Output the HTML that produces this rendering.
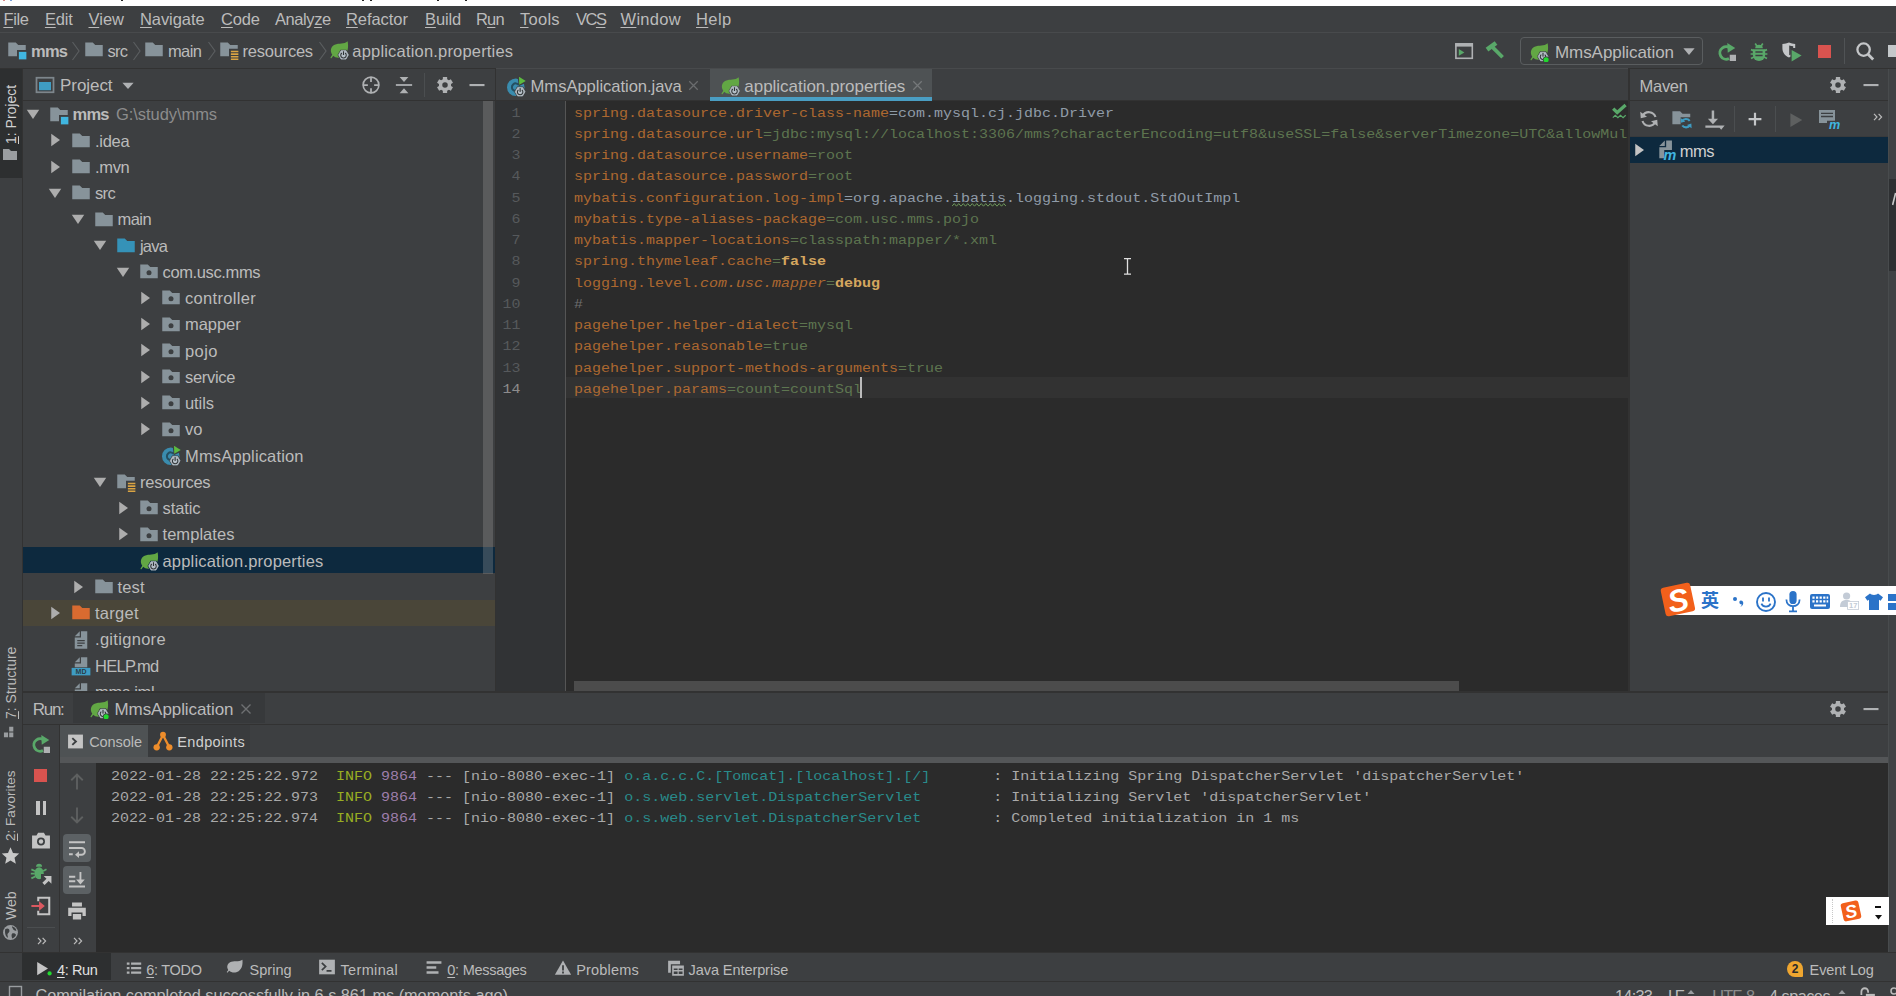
<!DOCTYPE html>
<html lang="en"><head><meta charset="utf-8"><title>mms - application.properties</title><style>
html,body{margin:0;padding:0;background:#3c3f41;}
body{width:1896px;height:996px;position:relative;overflow:hidden;font-family:"Liberation Sans",sans-serif;}
.u{position:absolute;white-space:pre;font-family:"Liberation Sans",sans-serif;}
.m{position:absolute;white-space:pre;font-family:"Liberation Mono",monospace;transform:scaleY(0.83);transform-origin:0 14.5px;opacity:.8;}
.mc{transform:scaleY(0.9);opacity:.88;}
u{text-decoration:underline;text-underline-offset:2px;text-decoration-thickness:1px}
</style></head>
<body>
<div style="position:absolute;left:0px;top:0px;width:1896px;height:6px;background:#ffffff;"></div>
<div style="position:absolute;left:10px;top:0px;width:2px;height:1px;background:#7aa0d8;"></div>
<div style="position:absolute;left:3px;top:0px;width:2px;height:1px;background:#d88a8a;"></div>
<div style="position:absolute;left:121px;top:0px;width:2px;height:1px;background:#222;"></div>
<div style="position:absolute;left:362px;top:0px;width:2px;height:1px;background:#222;"></div>
<div style="position:absolute;left:370px;top:0px;width:2px;height:1px;background:#222;"></div>
<div style="position:absolute;left:437px;top:0px;width:2px;height:1px;background:#222;"></div>
<div style="position:absolute;left:465px;top:0px;width:2px;height:1px;background:#222;"></div>
<div style="position:absolute;left:0px;top:6px;width:1896px;height:990px;background:#3d3f41;"></div>
<div style="position:absolute;left:0px;top:32px;width:1896px;height:1px;background:#484a4c;"></div>
<div class="u" style="left:3.4px;top:7.00px;height:24px;line-height:24px;font-size:16.5px;color:#bbbbbb;;letter-spacing:-0.327px"><u>F</u>ile</div>
<div class="u" style="left:44.9px;top:7.00px;height:24px;line-height:24px;font-size:16.5px;color:#bbbbbb;;letter-spacing:-0.188px"><u>E</u>dit</div>
<div class="u" style="left:88.5px;top:7.00px;height:24px;line-height:24px;font-size:16.5px;color:#bbbbbb;;letter-spacing:0.004px"><u>V</u>iew</div>
<div class="u" style="left:140px;top:7.00px;height:24px;line-height:24px;font-size:16.5px;color:#bbbbbb;;letter-spacing:-0.08px"><u>N</u>avigate</div>
<div class="u" style="left:221px;top:7.00px;height:24px;line-height:24px;font-size:16.5px;color:#bbbbbb;;letter-spacing:-0.138px"><u>C</u>ode</div>
<div class="u" style="left:275px;top:7.00px;height:24px;line-height:24px;font-size:16.5px;color:#bbbbbb;;letter-spacing:-0.431px">Analy<u>z</u>e</div>
<div class="u" style="left:346px;top:7.00px;height:24px;line-height:24px;font-size:16.5px;color:#bbbbbb;;letter-spacing:-0.072px"><u>R</u>efactor</div>
<div class="u" style="left:425px;top:7.00px;height:24px;line-height:24px;font-size:16.5px;color:#bbbbbb;;letter-spacing:-0.121px"><u>B</u>uild</div>
<div class="u" style="left:476px;top:7.00px;height:24px;line-height:24px;font-size:16.5px;color:#bbbbbb;;letter-spacing:-0.866px">R<u>u</u>n</div>
<div class="u" style="left:520px;top:7.00px;height:24px;line-height:24px;font-size:16.5px;color:#bbbbbb;;letter-spacing:0.274px"><u>T</u>ools</div>
<div class="u" style="left:576px;top:7.00px;height:24px;line-height:24px;font-size:16.5px;color:#bbbbbb;;letter-spacing:-1.513px">VC<u>S</u></div>
<div class="u" style="left:620.5px;top:7.00px;height:24px;line-height:24px;font-size:16.5px;color:#bbbbbb;;letter-spacing:0.299px"><u>W</u>indow</div>
<div class="u" style="left:696px;top:7.00px;height:24px;line-height:24px;font-size:16.5px;color:#bbbbbb;;letter-spacing:0.387px"><u>H</u>elp</div>
<div style="position:absolute;left:0px;top:68px;width:1896px;height:1px;background:#323232;"></div>
<svg style="position:absolute;left:7px;top:40px" width="20" height="20" viewBox="0 0 16 16" ><path fill="#87939A" d="M1,13 L8,13 L8,8 L15,8 L15,4 L9,4 L7,2 L1,2 Z"/><rect x="9.5" y="9.5" width="6" height="6" fill="#40B6E0"/></svg>
<div class="u" style="left:31px;top:39.20px;height:24px;line-height:24px;font-size:16.5px;color:#bbbbbb;font-weight:bold;letter-spacing:-0.744px">mms</div>
<svg style="position:absolute;left:71px;top:41px" width="10" height="20" viewBox="0 0 10 20" ><path d="M1.5,1 L8,10 L1.5,19" fill="none" stroke="#5a5d5f" stroke-width="1.2"/></svg>
<svg style="position:absolute;left:84px;top:40px" width="20" height="20" viewBox="0 0 16 16" ><path fill="#87939A" d="M1,13 L15,13 L15,4 L9,4 L7,2 L1,2 Z"/></svg>
<div class="u" style="left:107.4px;top:39.20px;height:24px;line-height:24px;font-size:16.5px;color:#bbbbbb;;letter-spacing:-0.667px">src</div>
<svg style="position:absolute;left:132px;top:41px" width="10" height="20" viewBox="0 0 10 20" ><path d="M1.5,1 L8,10 L1.5,19" fill="none" stroke="#5a5d5f" stroke-width="1.2"/></svg>
<svg style="position:absolute;left:144px;top:40px" width="20" height="20" viewBox="0 0 16 16" ><path fill="#87939A" d="M1,13 L15,13 L15,4 L9,4 L7,2 L1,2 Z"/></svg>
<div class="u" style="left:167.9px;top:39.20px;height:24px;line-height:24px;font-size:16.5px;color:#bbbbbb;;letter-spacing:-0.541px">main</div>
<svg style="position:absolute;left:207px;top:41px" width="10" height="20" viewBox="0 0 10 20" ><path d="M1.5,1 L8,10 L1.5,19" fill="none" stroke="#5a5d5f" stroke-width="1.2"/></svg>
<svg style="position:absolute;left:219px;top:40px" width="20" height="20" viewBox="0 0 16 16" ><path fill="#87939A" d="M1,13 L8,13 L8,7 L15,7 L15,4 L9,4 L7,2 L1,2 Z"/><path fill="#D9A343" d="M9.5,8.5h6v1.3h-6z M9.5,10.6h6v1.3h-6z M9.5,12.7h6v1.3h-6z M9.5,14.8h6v1.2h-6z"/></svg>
<div class="u" style="left:242.5px;top:39.20px;height:24px;line-height:24px;font-size:16.5px;color:#bbbbbb;;letter-spacing:-0.228px">resources</div>
<svg style="position:absolute;left:318px;top:41px" width="10" height="20" viewBox="0 0 10 20" ><path d="M1.5,1 L8,10 L1.5,19" fill="none" stroke="#5a5d5f" stroke-width="1.2"/></svg>
<svg style="position:absolute;left:329px;top:40px" width="20" height="20" viewBox="0 0 16 16" ><path fill="#62A744" d="M14.9,1 C15.7,5.2 15.5,10.4 11.2,13.1 C8,15 4.8,14.1 3.4,12.6 L2.1,14.4 C1.8,14.9 1,14.4 1.3,13.8 L2.6,11.7 C0.6,8.8 1.4,5.3 4.5,3.8 C8,2.2 12,3.7 14.9,1 Z"/><polygon points="16.40,11.90 14.00,16.06 9.20,16.06 6.80,11.90 9.20,7.74 14.00,7.74" fill="#3c3f41"/><polygon points="15.50,11.90 13.55,15.28 9.65,15.28 7.70,11.90 9.65,8.52 13.55,8.52" fill="#B4BEC6" stroke="#B4BEC6" stroke-width="0.6" stroke-linejoin="round"/><path fill="none" stroke="#2f3335" stroke-width="0.85" d="M10.25,10.4 A2.2,2.2 0 1 0 12.95,10.4"/><rect x="11.15" y="9.0" width="0.9" height="3" fill="#2f3335"/></svg>
<div class="u" style="left:352.3px;top:39.20px;height:24px;line-height:24px;font-size:16.5px;color:#bbbbbb;;letter-spacing:0.188px">application.properties</div>
<svg style="position:absolute;left:1454px;top:41px" width="20" height="20" viewBox="0 0 20 20" ><rect x="1.9" y="2.9" width="16.4" height="14.4" fill="none" stroke="#AFB1B3" stroke-width="1.6"/><rect x="1.2" y="2.2" width="17.8" height="3.4" fill="#AFB1B3"/><path fill="#59A869" d="M4.8,8 L10.4,11.4 L4.8,14.8 Z"/></svg>
<svg style="position:absolute;left:1484px;top:40px" width="22" height="22" viewBox="0 0 22 22" ><path stroke="#59A869" stroke-width="4.6" fill="none" d="M3,9.6 L12,3"/><path stroke="#59A869" stroke-width="3.7" fill="none" d="M8,6.6 L18.6,17.2"/></svg>
<div style="position:absolute;left:1520px;top:37px;width:181px;height:26px;border:1px solid #5a5d5f;border-radius:4px;box-sizing:content-box"></div>
<svg style="position:absolute;left:1528.5px;top:41.5px" width="20" height="20" viewBox="0 0 16 16" ><path fill="#62A744" d="M14.9,1 C15.7,5.2 15.5,10.4 11.2,13.1 C8,15 4.8,14.1 3.4,12.6 L2.1,14.4 C1.8,14.9 1,14.4 1.3,13.8 L2.6,11.7 C0.6,8.8 1.4,5.3 4.5,3.8 C8,2.2 12,3.7 14.9,1 Z"/><polygon points="16.00,11.60 13.60,15.76 8.80,15.76 6.40,11.60 8.80,7.44 13.60,7.44" fill="#3c3f41"/><polygon points="15.10,11.60 13.15,14.98 9.25,14.98 7.30,11.60 9.25,8.22 13.15,8.22" fill="#B4BEC6" stroke="#B4BEC6" stroke-width="0.6" stroke-linejoin="round"/><path fill="none" stroke="#2f3335" stroke-width="0.85" d="M9.85,10.1 A2.2,2.2 0 1 0 12.549999999999999,10.1"/><rect x="10.75" y="8.7" width="0.9" height="3" fill="#2f3335"/><circle cx="13.7" cy="14.2" r="2.6" fill="#3c3f41"/><circle cx="13.7" cy="14.2" r="2.05" fill="#21D82E"/></svg>
<div class="u" style="left:1555px;top:41.20px;height:24px;line-height:24px;font-size:17px;color:#bbbbbb;;letter-spacing:-0.071px">MmsApplication</div>
<svg style="position:absolute;left:1680px;top:42px" width="18" height="18" viewBox="0 0 16 16" ><path fill="#AFB1B3" d="M3,5.5 L13,5.5 L8,11.5 Z"/></svg>
<svg style="position:absolute;left:1717px;top:42px" width="20" height="20" viewBox="0 0 16 16" ><path fill="none" stroke="#59A869" stroke-width="2.3" d="M11.2,5.6 A5,5 0 1 0 9.6,13.2"/><path fill="#59A869" d="M8.2,0.8 L14.6,4.8 L8.6,8.6 Z"/><rect x="10.2" y="10.2" width="5" height="5" fill="#AFB1B3"/></svg>
<svg style="position:absolute;left:1749px;top:42px" width="20" height="20" viewBox="0 0 20 20" ><path stroke="#59A869" stroke-width="1.7" fill="none" d="M6.2,1.6 L8,4.2 M13.8,1.6 L12,4.2 M2,7.6 L5,8.8 M1.6,12 L5,12 M2,16.6 L5,15 M18,7.6 L15,8.8 M18.4,12 L15,12 M18,16.6 L15,15"/><path fill="#59A869" d="M6.2,6.2 A3.8,3.4 0 0 1 13.8,6.2 Z"/><path fill="#59A869" d="M3.8,7.2 h12.4 v5.6 a6.2,6.2 0 0 1 -12.4,0 z"/><path stroke="#3c3f41" stroke-width="1.5" d="M6.4,10 H13.6 M6.4,13.6 H13.6"/></svg>
<svg style="position:absolute;left:1781px;top:42px" width="21" height="21" viewBox="0 0 21 21" ><path fill="#C4C6C8" d="M1.4,2 C4,2 6,1.4 8,0.6 C10,1.4 12,2 14.2,2 L14.2,6 L9.4,6 L9.4,14.8 L8,15.6 C3.4,13.4 1.4,10 1.4,6 Z"/><path fill="#3c3f41" d="M8.2,3.4 C9.8,3.9 11,4.1 12.2,4.2 L12.2,7.2 L9.8,7.2 L9.8,12.4 L8.2,13.2 Z"/><path fill="#59A869" d="M10.6,8 L20.6,13.6 L10.6,19.4 Z"/></svg>
<div style="position:absolute;left:1818px;top:45px;width:13px;height:13px;background:#D9534F;"></div>
<div style="position:absolute;left:1844px;top:38px;width:1px;height:26px;background:#505355;"></div>
<svg style="position:absolute;left:1854px;top:41px" width="22" height="22" viewBox="0 0 22 22" ><circle cx="9.6" cy="8.6" r="6.2" fill="none" stroke="#C4C6C8" stroke-width="2.3"/><path stroke="#C4C6C8" stroke-width="2.8" d="M13.8,13 L19.2,18.4"/></svg>
<div style="position:absolute;left:1888px;top:45px;width:8px;height:12px;background:#c4c8ca;"></div>
<div style="position:absolute;left:22px;top:69px;width:1px;height:884px;background:#323232;"></div>
<div style="position:absolute;left:0px;top:69px;width:22px;height:109px;background:#2d2f30;"></div>
<div class="u" style="left:11px;top:144px;height:20px;line-height:20px;margin-left:-10px;font-size:14px;color:#d0d0d0;letter-spacing:0px;transform-origin:0 0;transform:translate(0px,0px) rotate(-90deg);"><u>1</u>: Project</div>
<svg style="position:absolute;left:2px;top:147px" width="16" height="16" viewBox="0 0 16 16" ><path fill="#9a9da0" d="M1,13 L15,13 L15,4 L9,4 L7,2 L1,2 Z"/></svg>
<div class="u" style="left:11px;top:719px;height:20px;line-height:20px;margin-left:-10px;font-size:14px;color:#bbbbbb;letter-spacing:0px;transform-origin:0 0;transform:translate(0px,0px) rotate(-90deg);"><u>7</u>: Structure</div>
<svg style="position:absolute;left:3px;top:724px" width="15" height="15" viewBox="0 0 16 16" ><path fill="#9a9da0" d="M1,9 h4.4 v5 h-4.4z M6.6,9 h4.4 v5 h-4.4z M6.6,3 h4.4 v5 h-4.4z" /></svg>
<div class="u" style="left:11px;top:841px;height:20px;line-height:20px;margin-left:-10px;font-size:13.5px;color:#bbbbbb;letter-spacing:0px;transform-origin:0 0;transform:translate(0px,0px) rotate(-90deg);"><u>2</u>: Favorites</div>
<svg style="position:absolute;left:1px;top:846px" width="19" height="19" viewBox="0 0 16 16" ><path fill="#c8c8c8" d="M8,1 L10.1,5.8 L15.3,6.3 L11.4,9.8 L12.5,14.9 L8,12.2 L3.5,14.9 L4.6,9.8 L0.7,6.3 L5.9,5.8 Z"/></svg>
<div class="u" style="left:11px;top:920px;height:20px;line-height:20px;margin-left:-10px;font-size:14px;color:#bbbbbb;letter-spacing:0px;transform-origin:0 0;transform:translate(0px,0px) rotate(-90deg);">Web</div>
<svg style="position:absolute;left:2px;top:924px" width="17" height="17" viewBox="0 0 16 16" ><circle cx="8" cy="8" r="7" fill="#9a9da0"/><path fill="#3c3f41" d="M3,5 C5,3.6 6.6,4.2 7,6 C7.4,7.6 5.6,8 5.2,9.4 C4.8,10.8 6,12 5.4,13 C3.6,12 2.4,9 3,5 Z M9.4,2.2 C11.6,3 13,4.2 13.6,6 C12.4,6.6 11,6 10.4,4.8 C10,4 9.2,3.2 9.4,2.2 Z M9.6,9 C11,8.4 12.8,9 13.2,10.4 C12.4,12.2 11,13.4 9.6,13.6 C9,12 8.6,10 9.6,9 Z"/></svg>
<div style="position:absolute;left:23px;top:100px;width:472px;height:1px;background:#323232;"></div>
<svg style="position:absolute;left:35px;top:75px" width="20" height="20" viewBox="0 0 16 16" ><rect x="1.2" y="2.2" width="13.6" height="11.6" fill="none" stroke="#7d868c" stroke-width="1.4"/><rect x="3.2" y="5.6" width="9.6" height="6.6" fill="#3F9CC2"/></svg>
<div class="u" style="left:60.1px;top:74.20px;height:24px;line-height:24px;font-size:17px;color:#bbbbbb;;letter-spacing:-0.075px">Project</div>
<svg style="position:absolute;left:119px;top:76px" width="18" height="18" viewBox="0 0 16 16" ><path fill="#AFB1B3" d="M3,6 L13,6 L8,11.6 Z"/></svg>
<svg style="position:absolute;left:361px;top:75px" width="20" height="20" viewBox="0 0 16 16" ><circle cx="8" cy="8" r="6.3" fill="none" stroke="#AFB1B3" stroke-width="1.3"/><path fill="#AFB1B3" d="M7.3,1.5h1.4v4h-1.4z M7.3,10.5h1.4v4h-1.4z M1.5,7.3h4v1.4h-4z M10.5,7.3h4v1.4h-4z"/></svg>
<svg style="position:absolute;left:394px;top:75px" width="20" height="20" viewBox="0 0 16 16" ><rect x="1.5" y="7.3" width="13" height="1.4" fill="#AFB1B3"/><path fill="#AFB1B3" d="M4.5,1.5 L11.5,1.5 L8,5.5 Z M4.5,14.5 L11.5,14.5 L8,10.5 Z"/></svg>
<div style="position:absolute;left:424px;top:73px;width:1px;height:24px;background:#4b4e50;"></div>
<svg style="position:absolute;left:435px;top:75px" width="20" height="20" viewBox="0 0 16 16" ><path fill="#AFB1B3" fill-rule="evenodd" d="M6.27,3.41 L6.30,1.62 L9.70,1.62 L9.73,3.41 L11.11,4.21 L12.68,3.34 L14.37,6.28 L12.83,7.20 L12.83,8.80 L14.37,9.72 L12.68,12.66 L11.11,11.79 L9.73,12.59 L9.70,14.38 L6.30,14.38 L6.27,12.59 L4.89,11.79 L3.32,12.66 L1.63,9.72 L3.17,8.80 L3.17,7.20 L1.63,6.28 L3.32,3.34 L4.89,4.21 Z M5.8,8 a2.2,2.2 0 1 0 4.4,0 a2.2,2.2 0 1 0 -4.4,0 Z"/></svg>
<svg style="position:absolute;left:467px;top:75px" width="20" height="20" viewBox="0 0 16 16" ><rect x="2" y="7.2" width="12" height="1.7" fill="#AFB1B3"/></svg>
<div style="position:absolute;left:23px;top:547px;width:473px;height:26px;background:#0d293e;"></div>
<div style="position:absolute;left:23px;top:600px;width:473px;height:26px;background:#4a4639;"></div>
<div style="position:absolute;left:23px;top:101px;width:472px;height:590px;overflow:hidden">
<svg style="position:absolute;left:-0.5px;top:3.0px" width="20" height="20" viewBox="0 0 16 16" ><path fill="#ADADAD" d="M3,4.5 L13,4.5 L8,12 Z"/></svg>
<svg style="position:absolute;left:25.5px;top:3.5px" width="20" height="20" viewBox="0 0 16 16" ><path fill="#87939A" d="M1,13 L8,13 L8,8 L15,8 L15,4 L9,4 L7,2 L1,2 Z"/><rect x="9.5" y="9.5" width="6" height="6" fill="#40B6E0"/></svg>
<div class="u" style="left:49.5px;top:1.30px;height:24px;line-height:24px;font-size:16.5px;color:#bbbbbb;font-weight:bold;letter-spacing:-0.744px">mms</div>
<div class="u" style="left:93.0px;top:1.30px;height:24px;line-height:24px;font-size:16.5px;color:#8c8c8c;;letter-spacing:-0.064px">G:\study\mms</div>
<svg style="position:absolute;left:22.0px;top:29.25px" width="20" height="20" viewBox="0 0 16 16" ><path fill="#ADADAD" d="M5,3 L12,8 L5,13 Z"/></svg>
<svg style="position:absolute;left:48.0px;top:29.75px" width="20" height="20" viewBox="0 0 16 16" ><path fill="#87939A" d="M1,13 L15,13 L15,4 L9,4 L7,2 L1,2 Z"/></svg>
<div class="u" style="left:72.0px;top:27.55px;height:24px;line-height:24px;font-size:16.5px;color:#bbbbbb;;letter-spacing:-0.276px">.idea</div>
<svg style="position:absolute;left:22.0px;top:55.5px" width="20" height="20" viewBox="0 0 16 16" ><path fill="#ADADAD" d="M5,3 L12,8 L5,13 Z"/></svg>
<svg style="position:absolute;left:48.0px;top:56.0px" width="20" height="20" viewBox="0 0 16 16" ><path fill="#87939A" d="M1,13 L15,13 L15,4 L9,4 L7,2 L1,2 Z"/></svg>
<div class="u" style="left:72.0px;top:53.80px;height:24px;line-height:24px;font-size:16.5px;color:#bbbbbb;;letter-spacing:-0.341px">.mvn</div>
<svg style="position:absolute;left:22.0px;top:81.75px" width="20" height="20" viewBox="0 0 16 16" ><path fill="#ADADAD" d="M3,4.5 L13,4.5 L8,12 Z"/></svg>
<svg style="position:absolute;left:48.0px;top:82.25px" width="20" height="20" viewBox="0 0 16 16" ><path fill="#87939A" d="M1,13 L15,13 L15,4 L9,4 L7,2 L1,2 Z"/></svg>
<div class="u" style="left:72.0px;top:80.05px;height:24px;line-height:24px;font-size:16.5px;color:#bbbbbb;;letter-spacing:-0.667px">src</div>
<svg style="position:absolute;left:44.5px;top:108.0px" width="20" height="20" viewBox="0 0 16 16" ><path fill="#ADADAD" d="M3,4.5 L13,4.5 L8,12 Z"/></svg>
<svg style="position:absolute;left:70.5px;top:108.5px" width="20" height="20" viewBox="0 0 16 16" ><path fill="#87939A" d="M1,13 L15,13 L15,4 L9,4 L7,2 L1,2 Z"/></svg>
<div class="u" style="left:94.5px;top:106.30px;height:24px;line-height:24px;font-size:16.5px;color:#bbbbbb;;letter-spacing:-0.541px">main</div>
<svg style="position:absolute;left:67.0px;top:134.25px" width="20" height="20" viewBox="0 0 16 16" ><path fill="#ADADAD" d="M3,4.5 L13,4.5 L8,12 Z"/></svg>
<svg style="position:absolute;left:93.0px;top:134.75px" width="20" height="20" viewBox="0 0 16 16" ><path fill="#3592B8" d="M1,13 L15,13 L15,4 L9,4 L7,2 L1,2 Z"/></svg>
<div class="u" style="left:117.0px;top:132.55px;height:24px;line-height:24px;font-size:16.5px;color:#bbbbbb;;letter-spacing:-0.795px">java</div>
<svg style="position:absolute;left:89.5px;top:160.5px" width="20" height="20" viewBox="0 0 16 16" ><path fill="#ADADAD" d="M3,4.5 L13,4.5 L8,12 Z"/></svg>
<svg style="position:absolute;left:115.5px;top:161.0px" width="20" height="20" viewBox="0 0 16 16" ><path fill="#87939A" d="M1,13 L15,13 L15,4 L9,4 L7,2 L1,2 Z"/><circle cx="8" cy="8.6" r="2" fill="#3c3f41"/></svg>
<div class="u" style="left:139.5px;top:158.80px;height:24px;line-height:24px;font-size:16.5px;color:#bbbbbb;;letter-spacing:-0.37px">com.usc.mms</div>
<svg style="position:absolute;left:112.0px;top:186.75px" width="20" height="20" viewBox="0 0 16 16" ><path fill="#ADADAD" d="M5,3 L12,8 L5,13 Z"/></svg>
<svg style="position:absolute;left:138.0px;top:187.25px" width="20" height="20" viewBox="0 0 16 16" ><path fill="#87939A" d="M1,13 L15,13 L15,4 L9,4 L7,2 L1,2 Z"/><circle cx="8" cy="8.6" r="2" fill="#3c3f41"/></svg>
<div class="u" style="left:162.0px;top:185.05px;height:24px;line-height:24px;font-size:16.5px;color:#bbbbbb;;letter-spacing:0.312px">controller</div>
<svg style="position:absolute;left:112.0px;top:213.0px" width="20" height="20" viewBox="0 0 16 16" ><path fill="#ADADAD" d="M5,3 L12,8 L5,13 Z"/></svg>
<svg style="position:absolute;left:138.0px;top:213.5px" width="20" height="20" viewBox="0 0 16 16" ><path fill="#87939A" d="M1,13 L15,13 L15,4 L9,4 L7,2 L1,2 Z"/><circle cx="8" cy="8.6" r="2" fill="#3c3f41"/></svg>
<div class="u" style="left:162.0px;top:211.30px;height:24px;line-height:24px;font-size:16.5px;color:#bbbbbb;;letter-spacing:-0.042px">mapper</div>
<svg style="position:absolute;left:112.0px;top:239.25px" width="20" height="20" viewBox="0 0 16 16" ><path fill="#ADADAD" d="M5,3 L12,8 L5,13 Z"/></svg>
<svg style="position:absolute;left:138.0px;top:239.75px" width="20" height="20" viewBox="0 0 16 16" ><path fill="#87939A" d="M1,13 L15,13 L15,4 L9,4 L7,2 L1,2 Z"/><circle cx="8" cy="8.6" r="2" fill="#3c3f41"/></svg>
<div class="u" style="left:162.0px;top:237.55px;height:24px;line-height:24px;font-size:16.5px;color:#bbbbbb;;letter-spacing:0.399px">pojo</div>
<svg style="position:absolute;left:112.0px;top:265.5px" width="20" height="20" viewBox="0 0 16 16" ><path fill="#ADADAD" d="M5,3 L12,8 L5,13 Z"/></svg>
<svg style="position:absolute;left:138.0px;top:266.0px" width="20" height="20" viewBox="0 0 16 16" ><path fill="#87939A" d="M1,13 L15,13 L15,4 L9,4 L7,2 L1,2 Z"/><circle cx="8" cy="8.6" r="2" fill="#3c3f41"/></svg>
<div class="u" style="left:162.0px;top:263.80px;height:24px;line-height:24px;font-size:16.5px;color:#bbbbbb;;letter-spacing:-0.324px">service</div>
<svg style="position:absolute;left:112.0px;top:291.75px" width="20" height="20" viewBox="0 0 16 16" ><path fill="#ADADAD" d="M5,3 L12,8 L5,13 Z"/></svg>
<svg style="position:absolute;left:138.0px;top:292.25px" width="20" height="20" viewBox="0 0 16 16" ><path fill="#87939A" d="M1,13 L15,13 L15,4 L9,4 L7,2 L1,2 Z"/><circle cx="8" cy="8.6" r="2" fill="#3c3f41"/></svg>
<div class="u" style="left:162.0px;top:290.05px;height:24px;line-height:24px;font-size:16.5px;color:#bbbbbb;;letter-spacing:-0.069px">utils</div>
<svg style="position:absolute;left:112.0px;top:318.0px" width="20" height="20" viewBox="0 0 16 16" ><path fill="#ADADAD" d="M5,3 L12,8 L5,13 Z"/></svg>
<svg style="position:absolute;left:138.0px;top:318.5px" width="20" height="20" viewBox="0 0 16 16" ><path fill="#87939A" d="M1,13 L15,13 L15,4 L9,4 L7,2 L1,2 Z"/><circle cx="8" cy="8.6" r="2" fill="#3c3f41"/></svg>
<div class="u" style="left:162.0px;top:316.30px;height:24px;line-height:24px;font-size:16.5px;color:#bbbbbb;;letter-spacing:-0.119px">vo</div>
<svg style="position:absolute;left:138.0px;top:344.75px" width="20" height="20" viewBox="0 0 16 16" ><circle cx="7.8" cy="8.2" r="7" fill="#3A8CAE"/><path fill="none" stroke="#244F61" stroke-width="1.6" d="M10.2,6.2 A3.1,3.1 0 1 0 10.2,10.2"/><path fill="#3c3f41" d="M9.2,-1 L17,-1 L17,4.2 L10.2,7.4 Z"/><path fill="#5DBB3F" d="M10.4,-0.2 L15.8,3.1 L10.6,6.2 Z"/><polygon points="16.10,11.80 13.70,15.96 8.90,15.96 6.50,11.80 8.90,7.64 13.70,7.64" fill="#3c3f41"/><polygon points="15.20,11.80 13.25,15.18 9.35,15.18 7.40,11.80 9.35,8.42 13.25,8.42" fill="#B4BEC6" stroke="#B4BEC6" stroke-width="0.6" stroke-linejoin="round"/><path fill="none" stroke="#2f3335" stroke-width="0.85" d="M9.950000000000001,10.3 A2.2,2.2 0 1 0 12.65,10.3"/><rect x="10.850000000000001" y="8.9" width="0.9" height="3" fill="#2f3335"/></svg>
<div class="u" style="left:162.0px;top:342.55px;height:24px;line-height:24px;font-size:16.5px;color:#bbbbbb;;letter-spacing:0.159px">MmsApplication</div>
<svg style="position:absolute;left:67.0px;top:370.5px" width="20" height="20" viewBox="0 0 16 16" ><path fill="#ADADAD" d="M3,4.5 L13,4.5 L8,12 Z"/></svg>
<svg style="position:absolute;left:93.0px;top:371.0px" width="20" height="20" viewBox="0 0 16 16" ><path fill="#87939A" d="M1,13 L8,13 L8,7 L15,7 L15,4 L9,4 L7,2 L1,2 Z"/><path fill="#D9A343" d="M9.5,8.5h6v1.3h-6z M9.5,10.6h6v1.3h-6z M9.5,12.7h6v1.3h-6z M9.5,14.8h6v1.2h-6z"/></svg>
<div class="u" style="left:117.0px;top:368.80px;height:24px;line-height:24px;font-size:16.5px;color:#bbbbbb;;letter-spacing:-0.228px">resources</div>
<svg style="position:absolute;left:89.5px;top:396.75px" width="20" height="20" viewBox="0 0 16 16" ><path fill="#ADADAD" d="M5,3 L12,8 L5,13 Z"/></svg>
<svg style="position:absolute;left:115.5px;top:397.25px" width="20" height="20" viewBox="0 0 16 16" ><path fill="#87939A" d="M1,13 L15,13 L15,4 L9,4 L7,2 L1,2 Z"/><circle cx="8" cy="8.6" r="2" fill="#3c3f41"/></svg>
<div class="u" style="left:139.5px;top:395.05px;height:24px;line-height:24px;font-size:16.5px;color:#bbbbbb;;letter-spacing:-0.103px">static</div>
<svg style="position:absolute;left:89.5px;top:423.0px" width="20" height="20" viewBox="0 0 16 16" ><path fill="#ADADAD" d="M5,3 L12,8 L5,13 Z"/></svg>
<svg style="position:absolute;left:115.5px;top:423.5px" width="20" height="20" viewBox="0 0 16 16" ><path fill="#87939A" d="M1,13 L15,13 L15,4 L9,4 L7,2 L1,2 Z"/><circle cx="8" cy="8.6" r="2" fill="#3c3f41"/></svg>
<div class="u" style="left:139.5px;top:421.30px;height:24px;line-height:24px;font-size:16.5px;color:#bbbbbb;;letter-spacing:0.05px">templates</div>
<svg style="position:absolute;left:115.5px;top:449.75px" width="20" height="20" viewBox="0 0 16 16" ><path fill="#62A744" d="M14.9,1 C15.7,5.2 15.5,10.4 11.2,13.1 C8,15 4.8,14.1 3.4,12.6 L2.1,14.4 C1.8,14.9 1,14.4 1.3,13.8 L2.6,11.7 C0.6,8.8 1.4,5.3 4.5,3.8 C8,2.2 12,3.7 14.9,1 Z"/><polygon points="16.40,11.90 14.00,16.06 9.20,16.06 6.80,11.90 9.20,7.74 14.00,7.74" fill="#0d293e"/><polygon points="15.50,11.90 13.55,15.28 9.65,15.28 7.70,11.90 9.65,8.52 13.55,8.52" fill="#B4BEC6" stroke="#B4BEC6" stroke-width="0.6" stroke-linejoin="round"/><path fill="none" stroke="#2f3335" stroke-width="0.85" d="M10.25,10.4 A2.2,2.2 0 1 0 12.95,10.4"/><rect x="11.15" y="9.0" width="0.9" height="3" fill="#2f3335"/></svg>
<div class="u" style="left:139.5px;top:447.55px;height:24px;line-height:24px;font-size:16.5px;color:#bbbbbb;;letter-spacing:0.188px">application.properties</div>
<svg style="position:absolute;left:44.5px;top:475.5px" width="20" height="20" viewBox="0 0 16 16" ><path fill="#ADADAD" d="M5,3 L12,8 L5,13 Z"/></svg>
<svg style="position:absolute;left:70.5px;top:476.0px" width="20" height="20" viewBox="0 0 16 16" ><path fill="#87939A" d="M1,13 L15,13 L15,4 L9,4 L7,2 L1,2 Z"/></svg>
<div class="u" style="left:94.5px;top:473.80px;height:24px;line-height:24px;font-size:16.5px;color:#bbbbbb;;letter-spacing:0.173px">test</div>
<svg style="position:absolute;left:22.0px;top:501.75px" width="20" height="20" viewBox="0 0 16 16" ><path fill="#ADADAD" d="M5,3 L12,8 L5,13 Z"/></svg>
<svg style="position:absolute;left:48.0px;top:502.25px" width="20" height="20" viewBox="0 0 16 16" ><path fill="#D96B30" d="M1,13 L15,13 L15,4 L9,4 L7,2 L1,2 Z"/></svg>
<div class="u" style="left:72.0px;top:500.05px;height:24px;line-height:24px;font-size:16.5px;color:#bbbbbb;;letter-spacing:0.283px">target</div>
<svg style="position:absolute;left:48.0px;top:528.5px" width="20" height="20" viewBox="0 0 16 16" ><path fill="#87939A" d="M7,1 L3,5 L7,5 Z M8,1 L8,6 L3,6 L3,15 L13,15 L13,1 Z"/><path fill="#3c3f41" d="M5,8h6v1h-6z M5,10h6v1h-6z M5,12h4v1h-4z"/></svg>
<div class="u" style="left:72.0px;top:526.30px;height:24px;line-height:24px;font-size:16.5px;color:#bbbbbb;;letter-spacing:0.301px">.gitignore</div>
<svg style="position:absolute;left:48.0px;top:554.75px" width="20" height="20" viewBox="0 0 16 16" ><path fill="#87939A" d="M7,1 L3,5 L7,5 Z M8,1 L8,6 L3,6 L3,9 L13,9 L13,1 Z"/><rect x="0.5" y="9.5" width="15" height="6" fill="#3E9CC4"/><text x="8" y="14.6" font-family="Liberation Sans, sans-serif" font-size="5.6" font-weight="bold" fill="#2b3d47" text-anchor="middle">MD</text></svg>
<div class="u" style="left:72.0px;top:552.55px;height:24px;line-height:24px;font-size:16.5px;color:#bbbbbb;;letter-spacing:-0.712px">HELP.md</div>
<svg style="position:absolute;left:48.0px;top:581.0px" width="20" height="20" viewBox="0 0 16 16" ><path fill="#87939A" d="M7,1 L3,5 L7,5 Z M8,1 L8,6 L3,6 L3,15 L13,15 L13,1 Z"/></svg>
<div class="u" style="left:72.0px;top:578.80px;height:24px;line-height:24px;font-size:16.5px;color:#bbbbbb;;letter-spacing:-0.287px">mms.iml</div>
</div>
<div style="position:absolute;left:483px;top:101px;width:10px;height:473px;background:rgba(166,166,166,0.28);"></div>
<div style="position:absolute;left:495px;top:69px;width:1px;height:623px;background:#323232;"></div>
<div style="position:absolute;left:496px;top:100px;width:1132px;height:1px;background:#323232;"></div>
<div style="position:absolute;left:496px;top:68px;width:1132px;height:1px;background:#484a4c;"></div>
<svg style="position:absolute;left:506px;top:76.5px" width="20" height="20" viewBox="0 0 16 16" ><circle cx="7.8" cy="8.2" r="7" fill="#3A8CAE"/><path fill="none" stroke="#244F61" stroke-width="1.6" d="M10.2,6.2 A3.1,3.1 0 1 0 10.2,10.2"/><path fill="#3c3f41" d="M9.2,-1 L17,-1 L17,4.2 L10.2,7.4 Z"/><path fill="#5DBB3F" d="M10.4,-0.2 L15.8,3.1 L10.6,6.2 Z"/><polygon points="16.10,11.80 13.70,15.96 8.90,15.96 6.50,11.80 8.90,7.64 13.70,7.64" fill="#3c3f41"/><polygon points="15.20,11.80 13.25,15.18 9.35,15.18 7.40,11.80 9.35,8.42 13.25,8.42" fill="#B4BEC6" stroke="#B4BEC6" stroke-width="0.6" stroke-linejoin="round"/><path fill="none" stroke="#2f3335" stroke-width="0.85" d="M9.950000000000001,10.3 A2.2,2.2 0 1 0 12.65,10.3"/><rect x="10.850000000000001" y="8.9" width="0.9" height="3" fill="#2f3335"/></svg>
<div class="u" style="left:530.6px;top:75.20px;height:24px;line-height:24px;font-size:16.6px;color:#bbbbbb;;letter-spacing:-0.051px">MmsApplication.java</div>
<svg style="position:absolute;left:685px;top:77px" width="17" height="17" viewBox="0 0 16 16" ><path stroke="#6a6c6e" stroke-width="1.2" fill="none" d="M4,4 L12,12 M12,4 L4,12"/></svg>
<div style="position:absolute;left:710px;top:69px;width:222px;height:31px;background:#4e5254;"></div>
<div style="position:absolute;left:710px;top:97px;width:222px;height:4px;background:#4A9EC3;"></div>
<svg style="position:absolute;left:719.5px;top:76px" width="20" height="20" viewBox="0 0 16 16" ><path fill="#62A744" d="M14.9,1 C15.7,5.2 15.5,10.4 11.2,13.1 C8,15 4.8,14.1 3.4,12.6 L2.1,14.4 C1.8,14.9 1,14.4 1.3,13.8 L2.6,11.7 C0.6,8.8 1.4,5.3 4.5,3.8 C8,2.2 12,3.7 14.9,1 Z"/><polygon points="16.40,11.90 14.00,16.06 9.20,16.06 6.80,11.90 9.20,7.74 14.00,7.74" fill="#4e5254"/><polygon points="15.50,11.90 13.55,15.28 9.65,15.28 7.70,11.90 9.65,8.52 13.55,8.52" fill="#B4BEC6" stroke="#B4BEC6" stroke-width="0.6" stroke-linejoin="round"/><path fill="none" stroke="#2f3335" stroke-width="0.85" d="M10.25,10.4 A2.2,2.2 0 1 0 12.95,10.4"/><rect x="11.15" y="9.0" width="0.9" height="3" fill="#2f3335"/></svg>
<div class="u" style="left:744.3px;top:75.20px;height:24px;line-height:24px;font-size:17px;color:#bbbbbb;;letter-spacing:-0.028px">application.properties</div>
<svg style="position:absolute;left:909px;top:77px" width="17" height="17" viewBox="0 0 16 16" ><path stroke="#75787a" stroke-width="1.2" fill="none" d="M4,4 L12,12 M12,4 L4,12"/></svg>
<div style="position:absolute;left:496px;top:101px;width:1132px;height:591px;background:#2b2b2b;"></div>
<div style="position:absolute;left:496px;top:101px;width:69px;height:591px;background:#313335;"></div>
<div style="position:absolute;left:565px;top:101px;width:1px;height:591px;background:#555555;"></div>
<div style="position:absolute;left:566px;top:377px;width:1063px;height:21px;background:#323232;"></div>
<div style="position:absolute;left:496px;top:101px;width:1132px;height:591px;overflow:hidden">
<div class="m" style="left:78px;top:1.72px;height:21px;line-height:21px;font-size:15px;color:#a9b7c6;"><span style="color:#cc7832">spring.datasource.driver-class-name</span><span style="color:#a9b7c6">=</span><span style="color:#a9b7c6">com.mysql.cj.jdbc.Driver</span></div>
<div class="m" style="left:0;width:24.5px;text-align:right;top:1.72px;height:21px;line-height:21px;font-size:15px;color:#606366">1</div>
<div class="m" style="left:78px;top:22.98px;height:21px;line-height:21px;font-size:15px;color:#a9b7c6;"><span style="color:#cc7832">spring.datasource.url</span><span style="color:#6a8759">=</span><span style="color:#6a8759">jdbc:mysql://localhost:3306/mms?characterEncoding=utf8&amp;useSSL=false&amp;serverTimezone=UTC&amp;allowMul</span></div>
<div class="m" style="left:0;width:24.5px;text-align:right;top:22.98px;height:21px;line-height:21px;font-size:15px;color:#606366">2</div>
<div class="m" style="left:78px;top:44.23px;height:21px;line-height:21px;font-size:15px;color:#a9b7c6;"><span style="color:#cc7832">spring.datasource.username</span><span style="color:#6a8759">=</span><span style="color:#6a8759">root</span></div>
<div class="m" style="left:0;width:24.5px;text-align:right;top:44.23px;height:21px;line-height:21px;font-size:15px;color:#606366">3</div>
<div class="m" style="left:78px;top:65.47px;height:21px;line-height:21px;font-size:15px;color:#a9b7c6;"><span style="color:#cc7832">spring.datasource.password</span><span style="color:#6a8759">=</span><span style="color:#6a8759">root</span></div>
<div class="m" style="left:0;width:24.5px;text-align:right;top:65.47px;height:21px;line-height:21px;font-size:15px;color:#606366">4</div>
<div class="m" style="left:78px;top:86.72px;height:21px;line-height:21px;font-size:15px;color:#a9b7c6;"><span style="color:#cc7832">mybatis.configuration.log-impl</span><span style="color:#a9b7c6">=</span><span style="color:#a9b7c6">org.apache.</span><span style="color:#a9b7c6">ibatis</span><span style="color:#a9b7c6">.logging.stdout.StdOutImpl</span></div>
<div class="m" style="left:0;width:24.5px;text-align:right;top:86.72px;height:21px;line-height:21px;font-size:15px;color:#606366">5</div>
<div class="m" style="left:78px;top:107.97px;height:21px;line-height:21px;font-size:15px;color:#a9b7c6;"><span style="color:#cc7832">mybatis.type-aliases-package</span><span style="color:#6a8759">=</span><span style="color:#6a8759">com.usc.mms.pojo</span></div>
<div class="m" style="left:0;width:24.5px;text-align:right;top:107.97px;height:21px;line-height:21px;font-size:15px;color:#606366">6</div>
<div class="m" style="left:78px;top:129.22px;height:21px;line-height:21px;font-size:15px;color:#a9b7c6;"><span style="color:#cc7832">mybatis.mapper-locations</span><span style="color:#6a8759">=</span><span style="color:#6a8759">classpath:mapper/*.xml</span></div>
<div class="m" style="left:0;width:24.5px;text-align:right;top:129.22px;height:21px;line-height:21px;font-size:15px;color:#606366">7</div>
<div class="m" style="left:78px;top:150.47px;height:21px;line-height:21px;font-size:15px;color:#a9b7c6;"><span style="color:#cc7832">spring.thymeleaf.cache</span><span style="color:#6a8759">=</span><span style="color:#ffc66d;font-weight:bold">false</span></div>
<div class="m" style="left:0;width:24.5px;text-align:right;top:150.47px;height:21px;line-height:21px;font-size:15px;color:#606366">8</div>
<div class="m" style="left:78px;top:171.72px;height:21px;line-height:21px;font-size:15px;color:#a9b7c6;"><span style="color:#cc7832">logging.level.</span><span style="color:#cc7832;font-style:italic">com.usc.mapper</span><span style="color:#6a8759">=</span><span style="color:#ffc66d;font-weight:bold">debug</span></div>
<div class="m" style="left:0;width:24.5px;text-align:right;top:171.72px;height:21px;line-height:21px;font-size:15px;color:#606366">9</div>
<div class="m" style="left:78px;top:192.97px;height:21px;line-height:21px;font-size:15px;color:#a9b7c6;"><span style="color:#808080">#</span></div>
<div class="m" style="left:0;width:24.5px;text-align:right;top:192.97px;height:21px;line-height:21px;font-size:15px;color:#606366">10</div>
<div class="m" style="left:78px;top:214.22px;height:21px;line-height:21px;font-size:15px;color:#a9b7c6;"><span style="color:#cc7832">pagehelper.helper-dialect</span><span style="color:#6a8759">=</span><span style="color:#6a8759">mysql</span></div>
<div class="m" style="left:0;width:24.5px;text-align:right;top:214.22px;height:21px;line-height:21px;font-size:15px;color:#606366">11</div>
<div class="m" style="left:78px;top:235.47px;height:21px;line-height:21px;font-size:15px;color:#a9b7c6;"><span style="color:#cc7832">pagehelper.reasonable</span><span style="color:#6a8759">=</span><span style="color:#6a8759">true</span></div>
<div class="m" style="left:0;width:24.5px;text-align:right;top:235.47px;height:21px;line-height:21px;font-size:15px;color:#606366">12</div>
<div class="m" style="left:78px;top:256.73px;height:21px;line-height:21px;font-size:15px;color:#a9b7c6;"><span style="color:#cc7832">pagehelper.support-methods-arguments</span><span style="color:#6a8759">=</span><span style="color:#6a8759">true</span></div>
<div class="m" style="left:0;width:24.5px;text-align:right;top:256.73px;height:21px;line-height:21px;font-size:15px;color:#606366">13</div>
<div class="m" style="left:78px;top:277.98px;height:21px;line-height:21px;font-size:15px;color:#a9b7c6;"><span style="color:#cc7832">pagehelper.params</span><span style="color:#6a8759">=</span><span style="color:#6a8759">count=countSql</span></div>
<div class="m" style="left:0;width:24.5px;text-align:right;top:277.98px;height:21px;line-height:21px;font-size:15px;color:#a4a3a3">14</div>
<svg style="position:absolute;left:456px;top:102.4px" width="54" height="4" viewBox="0 0 54 4" ><polyline fill="none" stroke="#6f9a5c" stroke-width="1" points="0.0,3.2 2.25,0.6 4.5,3.2 6.75,0.6 9.0,3.2 11.25,0.6 13.5,3.2 15.75,0.6 18.0,3.2 20.25,0.6 22.5,3.2 24.75,0.6 27.0,3.2 29.25,0.6 31.5,3.2 33.75,0.6 36.0,3.2 38.25,0.6 40.5,3.2 42.75,0.6 45.0,3.2 47.25,0.6 49.5,3.2 51.75,0.6 54.0,3.2"/></svg>
<div style="position:absolute;left:364px;top:276px;width:2px;height:21px;background:#bbbbbb;"></div>
</div>
<svg style="position:absolute;left:1611px;top:103px" width="17" height="16" viewBox="0 0 17 16" ><path fill="none" stroke="#59A869" stroke-width="3.3" d="M2.2,5.6 L6.2,9.4 L14.6,2"/><path fill="none" stroke="#59A869" stroke-width="1.2" d="M1.8,14.6 L4.3,12.2 L6.9,14.6 L9.5,12.2 L12.1,14.6 L14.7,12.2"/></svg>
<div style="position:absolute;left:574px;top:681px;width:885px;height:10px;background:#4c4c4c;"></div>
<svg style="position:absolute;left:1122px;top:257px" width="12" height="20" viewBox="0 0 12 20" ><path fill="none" stroke="#e0e0e0" stroke-width="1.3" d="M2,1.6 H9 M5.5,1.6 V17.2 M2,17.2 H9"/></svg>
<div style="position:absolute;left:1628px;top:69px;width:2px;height:623px;background:#323232;"></div>
<div style="position:absolute;left:1630px;top:100px;width:258px;height:1px;background:#323232;"></div>
<div class="u" style="left:1639.6px;top:74.20px;height:24px;line-height:24px;font-size:16.5px;color:#bbbbbb;;letter-spacing:-0.306px">Maven</div>
<svg style="position:absolute;left:1828px;top:75px" width="20" height="20" viewBox="0 0 16 16" ><path fill="#AFB1B3" fill-rule="evenodd" d="M6.27,3.41 L6.30,1.62 L9.70,1.62 L9.73,3.41 L11.11,4.21 L12.68,3.34 L14.37,6.28 L12.83,7.20 L12.83,8.80 L14.37,9.72 L12.68,12.66 L11.11,11.79 L9.73,12.59 L9.70,14.38 L6.30,14.38 L6.27,12.59 L4.89,11.79 L3.32,12.66 L1.63,9.72 L3.17,8.80 L3.17,7.20 L1.63,6.28 L3.32,3.34 L4.89,4.21 Z M5.8,8 a2.2,2.2 0 1 0 4.4,0 a2.2,2.2 0 1 0 -4.4,0 Z"/></svg>
<svg style="position:absolute;left:1861px;top:75px" width="20" height="20" viewBox="0 0 16 16" ><rect x="2" y="7.2" width="12" height="1.7" fill="#AFB1B3"/></svg>
<div style="position:absolute;left:1630px;top:136px;width:258px;height:1px;background:#383a3c;"></div>
<svg style="position:absolute;left:1639px;top:109px" width="20" height="20" viewBox="0 0 16 16" ><path fill="none" stroke="#AFB1B3" stroke-width="1.7" d="M13.2,6.4 A5.6,5.6 0 0 0 3,5.4 M2.8,9.6 A5.6,5.6 0 0 0 13,10.6"/><path fill="#AFB1B3" d="M1,2.2 L1.4,7.4 L6.4,6.2 Z M15,13.8 L14.6,8.6 L9.6,9.8 Z"/></svg>
<svg style="position:absolute;left:1671px;top:109px" width="22" height="22" viewBox="0 0 16 16" ><path fill="#87939A" d="M1,11 L7,11 L7,6 L14,6 L14,3.4 L8.4,3.4 L6.6,1.6 L1,1.6 Z"/><path fill="none" stroke="#3F9CC2" stroke-width="1.5" d="M13.6,8.6 A3.4,3.4 0 0 0 8,8.8 M8.2,12 A3.4,3.4 0 0 0 13.8,11.8"/><path fill="#3F9CC2" d="M7,6.6 L7.2,10 L10.4,9 Z M15,14 L14.8,10.6 L11.6,11.6 Z"/></svg>
<svg style="position:absolute;left:1704px;top:109px" width="22" height="22" viewBox="0 0 16 16" ><path fill="#AFB1B3" d="M5.6,1 h1.8 v6 h2.8 L6.5,11 L2.8,7 h2.8z M1,12 h11 v1.6 h-11z M10,12 L15,12 L12.5,15 Z"/></svg>
<div style="position:absolute;left:1734px;top:106px;width:1px;height:26px;background:#4b4e50;"></div>
<svg style="position:absolute;left:1745px;top:109px" width="20" height="20" viewBox="0 0 20 20" ><path fill="#C4C6C8" d="M8.9,3.8 h2.2 v5.3 h5.3 v2.2 h-5.3 v5.3 h-2.2 v-5.3 h-5.3 v-2.2 h5.3z"/></svg>
<div style="position:absolute;left:1775px;top:106px;width:1px;height:26px;background:#4b4e50;"></div>
<svg style="position:absolute;left:1786px;top:110px" width="20" height="20" viewBox="0 0 16 16" ><path fill="#5e6060" d="M3.5,2.5 L13,8 L3.5,13.5 Z"/></svg>
<svg style="position:absolute;left:1817px;top:108px" width="24" height="24" viewBox="0 0 18 18" ><path fill="#87939A" d="M1.5,1.5 h12 v8 h-6 v1.8 h-6 z"/><path stroke="#3c3f41" stroke-width="1" d="M3,4 h9 M3,6.4 h9"/><text x="9" y="15.6" font-family="Liberation Sans, sans-serif" font-style="italic" font-weight="bold" font-size="9.5" fill="#40B6E0">m</text></svg>
<svg style="position:absolute;left:1873px;top:113px" width="10" height="8" viewBox="0 0 10 8" ><path fill="none" stroke="#bbbbbb" stroke-width="1.2" d="M1,0.8 L4,4 L1,7.2 M5.6,0.8 L8.6,4 L5.6,7.2"/></svg>
<div style="position:absolute;left:1630px;top:137px;width:258px;height:26px;background:#0d293e;"></div>
<svg style="position:absolute;left:1629px;top:140px" width="20" height="20" viewBox="0 0 16 16" ><path fill="#c4c4c4" d="M5,3 L12,8 L5,13 Z"/></svg>
<svg style="position:absolute;left:1656px;top:139px" width="22" height="22" viewBox="0 0 16 16" ><path fill="#87939A" d="M6.4,1 L2.4,5 L6.4,5 Z M7.4,1 L7.4,6 L2.4,6 L2.4,14 L6,14 L6,8 L11.6,8 L11.6,1 Z"/><text x="5.4" y="15.4" font-family="Liberation Sans, sans-serif" font-style="italic" font-weight="bold" font-size="10.5" fill="#40B6E0">m</text></svg>
<div class="u" style="left:1679.7px;top:139.20px;height:24px;line-height:24px;font-size:16.5px;color:#d0d0d0;;letter-spacing:-0.517px">mms</div>
<div style="position:absolute;left:1888px;top:69px;width:8px;height:884px;background:#3f4244;"></div>
<div style="position:absolute;left:1888px;top:69px;width:1px;height:884px;background:#484b4d;"></div>
<div style="position:absolute;left:1889px;top:179px;width:7px;height:92px;background:#2e3032;"></div>
<svg style="position:absolute;left:1892px;top:192px" width="4" height="14" viewBox="0 0 4 14" ><path stroke="#c8c8c8" stroke-width="1.6" fill="none" d="M0.6,13 L3.6,1"/></svg>
<div style="position:absolute;left:23px;top:691px;width:1865px;height:2px;background:#323232;"></div>
<div style="position:absolute;left:23px;top:693px;width:1865px;height:31px;background:#3d3f41;"></div>
<div class="u" style="left:32.7px;top:698.20px;height:24px;line-height:24px;font-size:17px;color:#bbbbbb;;letter-spacing:-1.255px">Run:</div>
<div style="position:absolute;left:73px;top:693px;width:192px;height:30px;background:#37393b;"></div>
<svg style="position:absolute;left:89px;top:699px" width="20" height="20" viewBox="0 0 16 16" ><path fill="#62A744" d="M14.9,1 C15.7,5.2 15.5,10.4 11.2,13.1 C8,15 4.8,14.1 3.4,12.6 L2.1,14.4 C1.8,14.9 1,14.4 1.3,13.8 L2.6,11.7 C0.6,8.8 1.4,5.3 4.5,3.8 C8,2.2 12,3.7 14.9,1 Z"/><polygon points="16.00,11.60 13.60,15.76 8.80,15.76 6.40,11.60 8.80,7.44 13.60,7.44" fill="#37393b"/><polygon points="15.10,11.60 13.15,14.98 9.25,14.98 7.30,11.60 9.25,8.22 13.15,8.22" fill="#B4BEC6" stroke="#B4BEC6" stroke-width="0.6" stroke-linejoin="round"/><path fill="none" stroke="#2f3335" stroke-width="0.85" d="M9.85,10.1 A2.2,2.2 0 1 0 12.549999999999999,10.1"/><rect x="10.75" y="8.7" width="0.9" height="3" fill="#2f3335"/><circle cx="13.7" cy="14.2" r="2.6" fill="#37393b"/><circle cx="13.7" cy="14.2" r="2.05" fill="#21D82E"/></svg>
<div class="u" style="left:114.5px;top:698.20px;height:24px;line-height:24px;font-size:17px;color:#bbbbbb;;letter-spacing:-0.071px">MmsApplication</div>
<svg style="position:absolute;left:237px;top:700px" width="18" height="18" viewBox="0 0 16 16" ><path stroke="#6e7072" stroke-width="1.2" fill="none" d="M4,4 L12,12 M12,4 L4,12"/></svg>
<svg style="position:absolute;left:1828px;top:699px" width="20" height="20" viewBox="0 0 16 16" ><path fill="#AFB1B3" fill-rule="evenodd" d="M6.27,3.41 L6.30,1.62 L9.70,1.62 L9.73,3.41 L11.11,4.21 L12.68,3.34 L14.37,6.28 L12.83,7.20 L12.83,8.80 L14.37,9.72 L12.68,12.66 L11.11,11.79 L9.73,12.59 L9.70,14.38 L6.30,14.38 L6.27,12.59 L4.89,11.79 L3.32,12.66 L1.63,9.72 L3.17,8.80 L3.17,7.20 L1.63,6.28 L3.32,3.34 L4.89,4.21 Z M5.8,8 a2.2,2.2 0 1 0 4.4,0 a2.2,2.2 0 1 0 -4.4,0 Z"/></svg>
<svg style="position:absolute;left:1861px;top:699px" width="20" height="20" viewBox="0 0 16 16" ><rect x="2" y="7.2" width="12" height="1.7" fill="#AFB1B3"/></svg>
<div style="position:absolute;left:23px;top:724px;width:1865px;height:1px;background:#323232;"></div>
<div style="position:absolute;left:59px;top:725px;width:1px;height:228px;background:#323232;"></div>
<svg style="position:absolute;left:31px;top:734px" width="20" height="20" viewBox="0 0 16 16" ><path fill="none" stroke="#59A869" stroke-width="2.3" d="M11.2,5.6 A5,5 0 1 0 9.6,13.2"/><path fill="#59A869" d="M8.2,0.8 L14.6,4.8 L8.6,8.6 Z"/><rect x="10.2" y="10.2" width="5" height="5" fill="#AFB1B3"/></svg>
<div style="position:absolute;left:34px;top:769px;width:13px;height:13px;background:#D9534F;"></div>
<div style="position:absolute;left:36px;top:801px;width:3.5px;height:14px;background:#c4c4c4;"></div>
<div style="position:absolute;left:42.5px;top:801px;width:3.5px;height:14px;background:#c4c4c4;"></div>
<svg style="position:absolute;left:30px;top:830px" width="22" height="22" viewBox="0 0 16 16" ><path fill="#c4c4c4" d="M1.5,4 h3.2 l1.2,-2 h4.2 l1.2,2 h3.2 v9.5 h-13z"/><circle cx="8" cy="8.4" r="2.9" fill="#3c3f41"/><circle cx="8" cy="8.4" r="1.6" fill="#c4c4c4"/></svg>
<svg style="position:absolute;left:30px;top:863px" width="22" height="22" viewBox="0 0 16 16" ><ellipse cx="6.6" cy="7.4" rx="3.4" ry="4.4" fill="#59A869"/><path fill="#59A869" d="M4.4,2.8 A2.2,2.2 0 0 1 8.8,2.8 Z"/><path stroke="#59A869" stroke-width="1.3" fill="none" d="M1,4.6 L3.6,5.8 M0.6,7.8 L3.4,7.8 M1,11.2 L3.8,9.8 M12,4.6 L9.6,5.8"/><path fill="#3c3f41" d="M8,8 h8 v8 h-8z"/><path fill="#c4c4c4" d="M10,9.4 h5.6 v5.6 l-2,-2 l-3,3 l-1.6,-1.6 l3,-3z"/></svg>
<svg style="position:absolute;left:30px;top:895px" width="22" height="22" viewBox="0 0 16 16" ><path fill="none" stroke="#c4c4c4" stroke-width="1.5" d="M6,4.6 V2 H14 V14 H6 V11.4"/><path fill="#DB5860" d="M1,7.2 h5.6 v-2.6 l4.2,3.4 l-4.2,3.4 v-2.6 h-5.6z"/></svg>
<div style="position:absolute;left:27px;top:927px;width:28px;height:1px;background:#4b4e50;"></div>
<svg style="position:absolute;left:37px;top:937px" width="10" height="8" viewBox="0 0 10 8" ><path fill="none" stroke="#bbbbbb" stroke-width="1.2" d="M1,0.8 L4,4 L1,7.2 M5.6,0.8 L8.6,4 L5.6,7.2"/></svg>
<div style="position:absolute;left:60px;top:725px;width:88px;height:33px;background:#4e5254;"></div>
<svg style="position:absolute;left:67px;top:733px" width="17" height="17" viewBox="0 0 16 16" ><rect x="1" y="1.5" width="14" height="13" fill="#c4c4c4"/><path fill="none" stroke="#3c3f41" stroke-width="1.8" d="M5,4.8 L8.4,8 L5,11.2"/></svg>
<div class="u" style="left:89.2px;top:729.60px;height:24px;line-height:24px;font-size:14.5px;color:#bbbbbb;;letter-spacing:-0.072px">Console</div>
<div style="position:absolute;left:148px;top:725px;width:102px;height:32px;background:#393b3d;"></div>
<svg style="position:absolute;left:152px;top:730px" width="22" height="22" viewBox="0 0 16 16" ><path fill="none" stroke="#EE8D2B" stroke-width="1.7" d="M3.4,12.6 L8,3.6 L12.6,12.6"/><circle cx="8" cy="3.4" r="2.1" fill="#EE8D2B"/><circle cx="3.4" cy="12.6" r="2.3" fill="#EE8D2B"/><circle cx="12.6" cy="12.6" r="2.3" fill="#EE8D2B"/></svg>
<div class="u" style="left:177.3px;top:729.60px;height:24px;line-height:24px;font-size:14.5px;color:#d0d0d0;;letter-spacing:0.356px">Endpoints</div>
<div style="position:absolute;left:60px;top:757px;width:1828px;height:6px;background:#545658;"></div>
<div style="position:absolute;left:60px;top:763px;width:36px;height:190px;background:#3d3f41;"></div>
<svg style="position:absolute;left:67px;top:772px" width="20" height="20" viewBox="0 0 16 16" ><path fill="none" stroke="#5e6060" stroke-width="1.5" d="M8,2 V14 M3.4,6.6 L8,2 L12.6,6.6"/></svg>
<svg style="position:absolute;left:67px;top:805px" width="20" height="20" viewBox="0 0 16 16" ><path fill="none" stroke="#5e6060" stroke-width="1.5" d="M8,2 V14 M3.4,9.4 L8,14 L12.6,9.4"/></svg>
<div style="position:absolute;left:63px;top:834px;width:28px;height:28px;border-radius:4px;background:#5c6164"></div>
<svg style="position:absolute;left:67px;top:838px" width="20" height="20" viewBox="0 0 16 16" ><path fill="none" stroke="#c4c4c4" stroke-width="1.5" d="M1.6,3.4 H14.4 M1.6,8 H11.6 A2.7,2.7 0 0 1 11.6,13.4 H8 M1.6,13 H4.6"/><path fill="#c4c4c4" d="M9.6,10.6 V16 L6.4,13.4 Z"/></svg>
<div style="position:absolute;left:63px;top:866px;width:28px;height:28px;border-radius:4px;background:#5c6164"></div>
<svg style="position:absolute;left:67px;top:870px" width="20" height="20" viewBox="0 0 16 16" ><path fill="#c4c4c4" d="M1.6,4.6 h5 v1.5 h-5z M1.6,8.2 h5 v1.5 h-5z M1.6,12.4 h12.8 v1.5 h-12.8z M10,1.6 h1.5 v6 h2.7 L10.75,11.6 L7.3,7.6 h2.7z"/></svg>
<svg style="position:absolute;left:66px;top:900px" width="22" height="22" viewBox="0 0 16 16" ><path fill="#c4c4c4" d="M4.4,1.8 h7.2 v3 h-7.2z M1.6,5.6 h12.8 v6 h-2.4 v-2.6 h-8 v2.6 h-2.4z M5,10.2 h6 v4 h-6z"/></svg>
<svg style="position:absolute;left:73px;top:937px" width="10" height="8" viewBox="0 0 10 8" ><path fill="none" stroke="#bbbbbb" stroke-width="1.2" d="M1,0.8 L4,4 L1,7.2 M5.6,0.8 L8.6,4 L5.6,7.2"/></svg>
<div style="position:absolute;left:96px;top:763px;width:1792px;height:189px;background:#2b2b2b;"></div>
<div class="m mc" style="left:111px;top:766.10px;height:21px;line-height:21px;font-size:15px;color:#bbbbbb;">2022-01-28 22:25:22.972  <span style="color:#a8c023">INFO</span> <span style="color:#ae8abe">9864</span> --- [nio-8080-exec-1] <span style="color:#299999">o.a.c.c.C.[Tomcat].[localhost].[/]      </span> : Initializing Spring DispatcherServlet &#x27;dispatcherServlet&#x27;</div>
<div class="m mc" style="left:111px;top:787.10px;height:21px;line-height:21px;font-size:15px;color:#bbbbbb;">2022-01-28 22:25:22.973  <span style="color:#a8c023">INFO</span> <span style="color:#ae8abe">9864</span> --- [nio-8080-exec-1] <span style="color:#299999">o.s.web.servlet.DispatcherServlet       </span> : Initializing Servlet &#x27;dispatcherServlet&#x27;</div>
<div class="m mc" style="left:111px;top:808.10px;height:21px;line-height:21px;font-size:15px;color:#bbbbbb;">2022-01-28 22:25:22.974  <span style="color:#a8c023">INFO</span> <span style="color:#ae8abe">9864</span> --- [nio-8080-exec-1] <span style="color:#299999">o.s.web.servlet.DispatcherServlet       </span> : Completed initialization in 1 ms</div>
<div style="position:absolute;left:0px;top:952px;width:1896px;height:1px;background:#323232;"></div>
<div style="position:absolute;left:0px;top:953px;width:1896px;height:28px;background:#3d3f41;"></div>
<div style="position:absolute;left:22px;top:953px;width:89px;height:27px;background:#2d2f30;"></div>
<svg style="position:absolute;left:36px;top:961px" width="16" height="16" viewBox="0 0 16 16" ><path fill="#c4c4c4" d="M1.2,1 L12,7.6 L1.2,14.2 Z"/><circle cx="13.6" cy="12.4" r="2.1" fill="#21D82E"/></svg>
<div class="u" style="left:57px;top:958.20px;height:24px;line-height:24px;font-size:14.5px;color:#e0e0e0;;letter-spacing:-0.375px"><u>4</u>: Run</div>
<svg style="position:absolute;left:125px;top:959px" width="18" height="18" viewBox="0 0 16 16" ><path fill="#AFB1B3" d="M1.6,3 h2.4 v2 h-2.4z M5.4,3 h9 v2 h-9z M1.6,7 h2.4 v2 h-2.4z M5.4,7 h9 v2 h-9z M1.6,11 h2.4 v2 h-2.4z M5.4,11 h9 v2 h-9z"/></svg>
<div class="u" style="left:146.3px;top:958.20px;height:24px;line-height:24px;font-size:14.5px;color:#bbbbbb;;letter-spacing:-0.286px"><u>6</u>: TODO</div>
<svg style="position:absolute;left:226px;top:958px" width="18" height="18" viewBox="0 0 16 16" ><path fill="#AFB1B3" d="M14.6,1.6 C15,5 14.6,9.4 11.2,11.8 C8.4,13.6 4.8,13.2 2.8,11.4 C2.4,12 2,12.4 1.6,12.8 C1.2,13.2 0.4,12.6 0.8,12.2 C1.2,11.6 1.6,11.2 2,10.6 C0.4,8.2 1,5.2 3.6,3.8 C6.6,2.2 11.4,3.8 14.6,1.6 Z"/></svg>
<div class="u" style="left:249.4px;top:958.20px;height:24px;line-height:24px;font-size:14.5px;color:#bbbbbb;;letter-spacing:0.063px">Spring</div>
<svg style="position:absolute;left:318px;top:958px" width="18" height="18" viewBox="0 0 16 16" ><rect x="1" y="1.5" width="14" height="13" fill="#AFB1B3"/><path fill="none" stroke="#3c3f41" stroke-width="1.5" d="M3.4,4.4 L6.8,7.6 L3.4,10.8 M7.6,11.4 H12"/></svg>
<div class="u" style="left:340.5px;top:958.20px;height:24px;line-height:24px;font-size:14.5px;color:#bbbbbb;;letter-spacing:0.338px">Terminal</div>
<svg style="position:absolute;left:425px;top:959px" width="18" height="18" viewBox="0 0 16 16" ><path fill="#AFB1B3" d="M1.4,2 h13.2 v2.2 h-13.2z M1.4,6.4 h8.6 v2.2 h-8.6z M1.4,10.8 h10.6 v2.2 h-10.6z"/></svg>
<div class="u" style="left:447.3px;top:958.20px;height:24px;line-height:24px;font-size:14.5px;color:#bbbbbb;;letter-spacing:-0.267px"><u>0</u>: Messages</div>
<svg style="position:absolute;left:554px;top:959px" width="18" height="18" viewBox="0 0 16 16" ><path fill="#AFB1B3" d="M8,1.4 L15.2,14 H0.8 Z"/><path fill="#3c3f41" d="M7.2,5.6 h1.6 v4.6 h-1.6z M7.2,11.2 h1.6 v1.6 h-1.6z"/></svg>
<div class="u" style="left:576.2px;top:958.20px;height:24px;line-height:24px;font-size:14.5px;color:#bbbbbb;;letter-spacing:0.194px">Problems</div>
<svg style="position:absolute;left:667px;top:959px" width="18" height="18" viewBox="0 0 16 16" ><path fill="#AFB1B3" d="M1,1.6 h10.6 v3 h-8.2 v7.6 h-2.4z M4.6,5.8 h10.4 v9 h-10.4z"/><path fill="#3c3f41" d="M6,8.4 h3.4 v1.4 h-3.4z M10.4,8.4 h3.4 v1.4 h-3.4z M6,11 h3.4 v2.4 h-3.4z M10.4,11 h3.4 v2.4 h-3.4z"/></svg>
<div class="u" style="left:688.6px;top:958.20px;height:24px;line-height:24px;font-size:14.5px;color:#bbbbbb;;letter-spacing:-0.077px">Java Enterprise</div>
<div class="u" style="left:1787px;top:961px;width:16px;height:16px;border-radius:8px 8px 1px 8px;background:#EFA630;color:#2b2b2b;font-size:12px;line-height:16px;text-align:center;font-weight:bold">2</div>
<div class="u" style="left:1809.6px;top:958.20px;height:24px;line-height:24px;font-size:14.5px;color:#bbbbbb;;letter-spacing:-0.135px">Event Log</div>
<div style="position:absolute;left:0px;top:981px;width:1896px;height:1px;background:#323232;"></div>
<svg style="position:absolute;left:8px;top:985px" width="16" height="16" viewBox="0 0 16 16" ><rect x="1.5" y="1.5" width="12" height="12" fill="none" stroke="#9a9da0" stroke-width="1.4"/></svg>
<div class="u" style="left:35.4px;top:983.20px;height:24px;line-height:24px;font-size:16.3px;color:#bbbbbb;;letter-spacing:-0.011px">Compilation completed successfully in 6 s 861 ms (moments ago)</div>
<div class="u" style="left:1615px;top:983.70px;height:24px;line-height:24px;font-size:16.3px;color:#bbbbbb;;letter-spacing:-0.71px">14:33</div>
<div class="u" style="left:1668px;top:983.70px;height:24px;line-height:24px;font-size:16.3px;color:#bbbbbb;;letter-spacing:-2.408px">LF</div>
<div class="u" style="left:1712.3px;top:983.70px;height:24px;line-height:24px;font-size:16.3px;color:#8c8c8c;;letter-spacing:-0.825px">UTF-8</div>
<div class="u" style="left:1769px;top:983.70px;height:24px;line-height:24px;font-size:16.3px;color:#bbbbbb;;letter-spacing:-0.521px">4 spaces</div>
<svg style="position:absolute;left:1687px;top:989px" width="8" height="8" viewBox="0 0 8 8" ><path fill="#9a9da0" d="M0.5,5 L4,1 L7.5,5 Z"/></svg>
<svg style="position:absolute;left:1838px;top:989px" width="8" height="8" viewBox="0 0 8 8" ><path fill="#9a9da0" d="M0.5,5 L4,1 L7.5,5 Z"/></svg>
<svg style="position:absolute;left:1858px;top:986px" width="18" height="18" viewBox="0 0 16 16" ><path fill="none" stroke="#bbbbbb" stroke-width="1.6" d="M3,8 V5 A3,3 0 0 1 9,5 V6"/><rect x="7" y="7" width="8" height="8" fill="#bbbbbb"/></svg>
<svg style="position:absolute;left:1886px;top:986px" width="14" height="18" viewBox="0 0 14 18" ><circle cx="8" cy="5" r="3" fill="none" stroke="#bbbbbb" stroke-width="1.5"/></svg>
<div style="position:absolute;left:1672px;top:586px;width:224px;height:29px;background:#ffffff"></div>
<svg style="position:absolute;left:1658px;top:580px" width="40" height="40" viewBox="0 0 40 40" ><g transform="rotate(-12 20 20)"><rect x="5" y="5" width="30" height="29" rx="3" fill="#F2601B"/><text x="20" y="31" text-anchor="middle" font-family="Liberation Sans, sans-serif" font-weight="bold" font-style="italic" font-size="31" fill="#ffffff">S</text></g></svg>
<div class="u" style="left:1701px;top:589px;height:24px;line-height:24px;font-size:18px;font-weight:bold;color:#2B73C8;font-family:'Liberation Sans','Noto Sans CJK SC',sans-serif">英</div>
<svg style="position:absolute;left:1730px;top:590px" width="20" height="22" viewBox="0 0 20 22" ><circle cx="5" cy="9" r="2" fill="#2B73C8"/><path fill="#2B73C8" d="M10.6,10.6 c2.4,0 3.2,2 2.4,3.8 c-0.5,1.2 -1.6,2 -2.8,2.4 c1,-0.8 1.6,-1.6 1.4,-2.6 c-1.4,0 -2.2,-0.8 -2.2,-1.8 c0,-1 0.6,-1.8 1.2,-1.8z"/></svg>
<svg style="position:absolute;left:1755px;top:591px" width="22" height="22" viewBox="0 0 22 22" ><circle cx="11" cy="11" r="9" fill="none" stroke="#2B73C8" stroke-width="1.9"/><path stroke="#2B73C8" stroke-width="1.8" d="M8,6.6 V10.4 M14,6.6 V10.4"/><path fill="none" stroke="#2B73C8" stroke-width="1.7" d="M6.4,12.6 C8,16.6 14,16.6 15.6,12.6"/></svg>
<svg style="position:absolute;left:1783px;top:590px" width="20" height="24" viewBox="0 0 20 24" ><rect x="6.4" y="1" width="7.2" height="13" rx="3.6" fill="#2B73C8"/><path fill="none" stroke="#2B73C8" stroke-width="1.8" d="M3.4,9.6 C3.4,18.4 16.6,18.4 16.6,9.6 M10,16.4 V21 M6,21.4 H14"/></svg>
<svg style="position:absolute;left:1809px;top:593px" width="22" height="18" viewBox="0 0 22 18" ><rect x="1" y="1" width="20" height="15" rx="2" fill="#2B73C8"/><path fill="#fff" d="M3.4,3.6 h2.2 v2.2 h-2.2z M7,3.6 h2.2 v2.2 h-2.2z M10.6,3.6 h2.2 v2.2 h-2.2z M14.2,3.6 h2.2 v2.2 h-2.2z M17.6,3.6 h1.6 v2.2 h-1.6z M3.4,7.2 h2.2 v2.2 h-2.2z M7,7.2 h2.2 v2.2 h-2.2z M10.6,7.2 h2.2 v2.2 h-2.2z M14.2,7.2 h2.2 v2.2 h-2.2z M17.6,7.2 h1.6 v2.2 h-1.6z M5,11.4 h12 v2 h-12z"/></svg>
<svg style="position:absolute;left:1838px;top:591px" width="24" height="22" viewBox="0 0 24 22" ><circle cx="8.6" cy="5" r="3.6" fill="#c3cbd6"/><path fill="#c3cbd6" d="M2,16 C2,10 5,9 8.6,9 C10.4,9 12,9.4 13,10.4 L13,16 Z"/><rect x="9.6" y="10.4" width="11" height="8" fill="#ffffff" stroke="#c3cbd6" stroke-width="0.8"/><text x="15.2" y="17.4" text-anchor="middle" font-family="Liberation Sans, sans-serif" font-weight="bold" font-size="7.5" fill="#c3cbd6">17</text></svg>
<svg style="position:absolute;left:1864px;top:592px" width="20" height="20" viewBox="0 0 20 20" ><path fill="#2B73C8" d="M6,1.6 C7,3.4 13,3.4 14,1.6 L19,5.2 L16.6,8.8 L15,7.8 V18 H5 V7.8 L3.4,8.8 L1,5.2 Z"/></svg>
<svg style="position:absolute;left:1887px;top:592px" width="10" height="20" viewBox="0 0 10 20" ><path fill="#2B73C8" d="M1,2 h8 v7 h-8z M1,11 h8 v7 h-8z"/></svg>
<div style="position:absolute;left:1826px;top:897px;width:63px;height:28px;background:#ffffff;"></div>
<div style="position:absolute;left:1832px;top:899px;width:0;height:24px;border-left:1px dotted #c8c8c8"></div>
<svg style="position:absolute;left:1838px;top:898px" width="26" height="26" viewBox="0 0 26 26" ><g transform="rotate(-12 13 13)"><rect x="4" y="3.6" width="18" height="18.6" rx="2.6" fill="#F2601B"/><text x="13" y="19.6" text-anchor="middle" font-family="Liberation Sans, sans-serif" font-weight="bold" font-style="italic" font-size="18" fill="#ffffff">S</text></g></svg>
<div style="position:absolute;left:1875px;top:906px;width:6px;height:2.4px;background:#111111;"></div>
<svg style="position:absolute;left:1875px;top:915px" width="7" height="5" viewBox="0 0 7 5" ><path fill="#111111" d="M0,0 H7 L3.5,4.4 Z"/></svg>
</body></html>
